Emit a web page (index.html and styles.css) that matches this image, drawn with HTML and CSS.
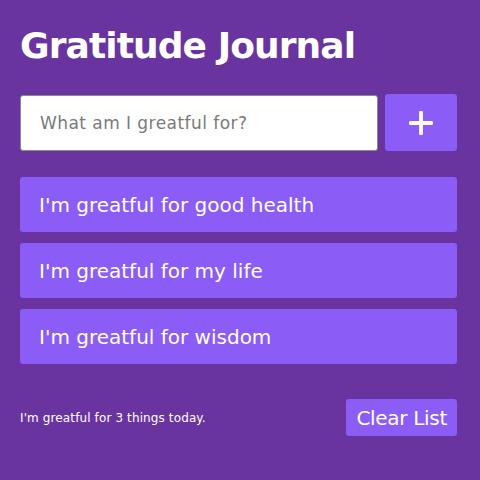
FILE: index.html
```html
<!DOCTYPE html>
<html>
<head>
<meta charset="utf-8">
<link rel="stylesheet" href="styles.css">
</head>
<body>
<main class="app">
  <h1 class="title">Gratitude Journal</h1>
  <form class="entry">
    <input class="entry-input" type="text" placeholder="What am I greatful for?">
    <button class="add-btn" type="button" aria-label="Add">
      <svg width="24" height="24" viewBox="0 0 24 24"><path d="M12 1.5V22.5M1.5 12H22.5" stroke="#fff" stroke-width="3.8" stroke-linecap="round" fill="none"/></svg>
    </button>
  </form>
  <ul class="list">
    <li class="item">I'm greatful for good health</li>
    <li class="item">I'm greatful for my life</li>
    <li class="item">I'm greatful for wisdom</li>
  </ul>
  <footer class="footer">
    <p class="count">I'm greatful for 3 things today.</p>
    <button class="clear-btn" type="button">Clear List</button>
  </footer>
</main>
</body>
</html>
```
FILE: styles.css
```css
html, body {
  margin: 0;
  padding: 0;
  background: #6934a0;
  height: 100%;
}
body {
  font-family: "DejaVu Sans", sans-serif;
  color: #fff;
}
.app {
  padding: 24px 23px 0 20px;
  display: flex;
  flex-direction: column;
}
.title {
  margin: 0;
  font-size: 36px;
  font-weight: 700;
  line-height: 44px;
  letter-spacing: -0.9px;
}
.entry {
  margin-top: 27px;
  display: flex;
  gap: 7px;
  align-items: stretch;
}
.entry-input {
  flex: 1;
  height: 56px;
  box-sizing: border-box;
  border: 1px solid #8a8a8a;
  border-radius: 3px;
  padding: 0 19px;
  font-family: inherit;
  font-size: 17px;
  letter-spacing: 0.45px;
  color: #333;
  background: #fff;
}
.entry-input::placeholder { color: #7a7a7a; }
.add-btn {
  width: 72px;
  height: 57px;
  margin-top: -1px;
  border: 0;
  border-radius: 3px;
  background: #8b5cf6;
  display: flex;
  align-items: center;
  justify-content: center;
  padding: 0;
}
.list {
  list-style: none;
  margin: 26px 0 0;
  padding: 0;
  display: flex;
  flex-direction: column;
  gap: 11px;
}
.item {
  height: 55px;
  box-sizing: border-box;
  background: #8b5cf6;
  border-radius: 3px;
  padding: 0 19px;
  display: flex;
  align-items: center;
  font-size: 20px;
}
.footer {
  margin-top: 35px;
  display: flex;
  justify-content: space-between;
  align-items: center;
}
.count {
  margin: 0;
  font-size: 12px;
  letter-spacing: 0.12px;
}
.clear-btn {
  height: 37px;
  border: 0;
  border-radius: 3px;
  background: #8b5cf6;
  color: #fff;
  font-family: inherit;
  font-size: 20px;
  letter-spacing: -0.3px;
  padding: 0 10px;
}
```
